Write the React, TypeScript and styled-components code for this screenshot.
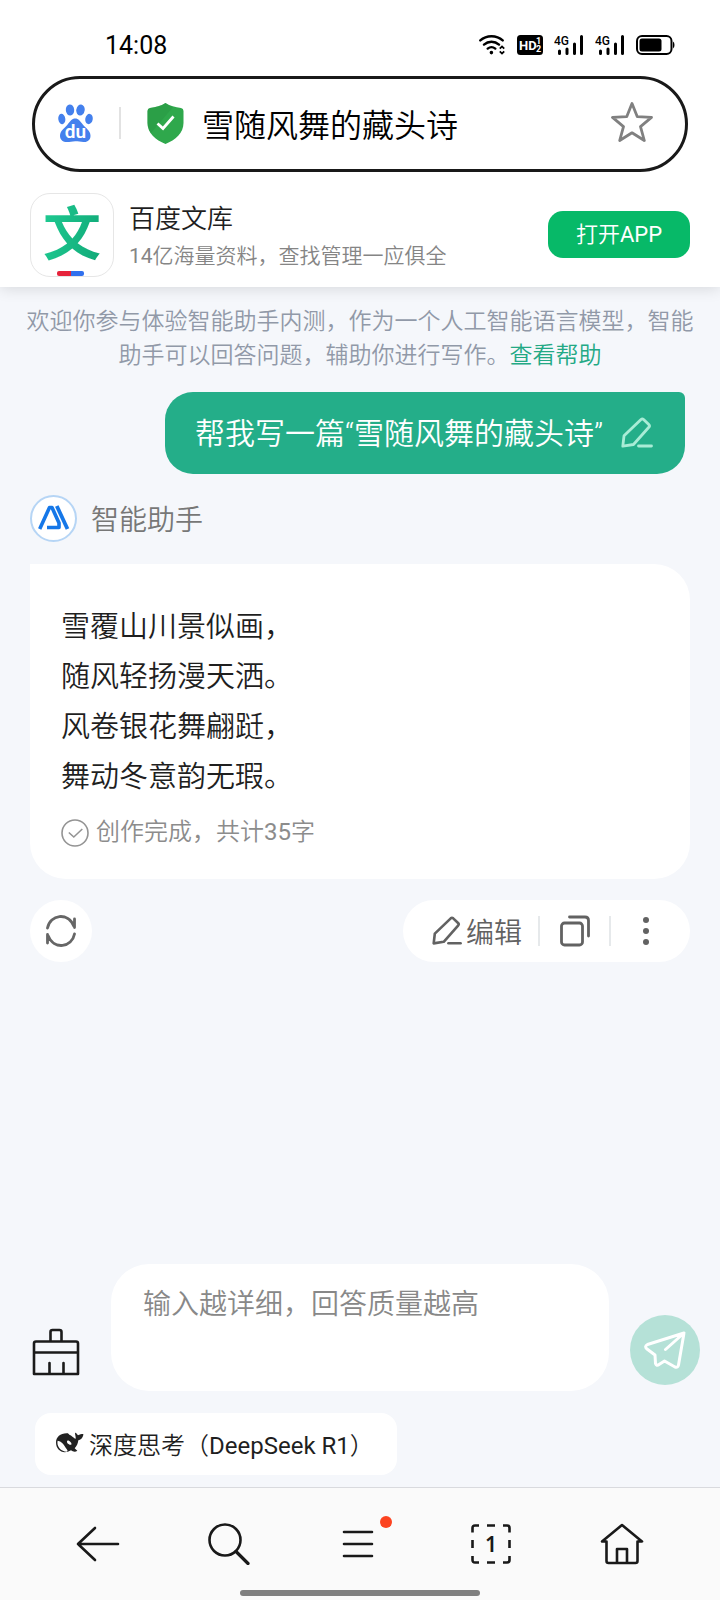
import React, { useState } from 'react';
import styled, { createGlobalStyle } from 'styled-components';

const GlobalStyle = createGlobalStyle`
  *, *::before, *::after { box-sizing: border-box; }
  body {
    margin: 0;
    background: #f5f7fb;
    font-family: Roboto, 'Noto Sans CJK SC', sans-serif;
    font-weight: 350;
    color: #1f1f1f;
  }
  button, input, textarea { font: inherit; color: inherit; }
  button { border: 0; padding: 0; background: none; cursor: pointer; }
  svg { display: block; flex: none; }
`;

const Page = styled.div`
  display: flex;
  flex-direction: column;
  min-height: 100vh;
`;

const Latin = styled.span`
  font-weight: 400;
`;

const Header = styled.header`
  background: #fff;
  box-shadow: 0 2px 14px rgba(0, 0, 0, 0.12);
  z-index: 1;
`;

const StatusBar = styled.div`
  display: flex;
  align-items: center;
  justify-content: space-between;
  height: 76px;
  padding: 14px 45px 0 105px;
  color: #000;
`;

const Clock = styled.time`
  font-size: 25px;
  font-weight: 400;
`;

const StatusIcons = styled.div`
  display: flex;
  align-items: center;
  gap: 11px;
`;

const SearchBar = styled.div`
  display: flex;
  align-items: center;
  height: 96px;
  margin: 0 32px;
  padding: 0 32px 2px 23px;
  border: 3px solid #191919;
  border-radius: 48px;
`;

const Divider = styled.span<{ $tall?: boolean }>`
  flex: none;
  width: 2px;
  height: ${(p) => (p.$tall ? 32 : 30)}px;
  background: ${(p) => (p.$tall ? '#e2e2e2' : '#e6e9eb')};
`;

const SearchIcons = styled.div`
  display: flex;
  align-items: center;
  gap: 26px;
  margin-right: 18px;
`;

const SearchInput = styled.input`
  flex: 1;
  min-width: 0;
  height: 60px;
  padding: 0;
  border: 0;
  outline: 0;
  background: none;
  font-size: 32px;
  color: #000;
`;

const StarButton = styled.button`
  padding-bottom: 3px;
`;

const Banner = styled.div`
  display: flex;
  align-items: center;
  gap: 15px;
  padding: 21px 30px 10px;
`;

const BannerLogo = styled.div`
  position: relative;
  display: flex;
  justify-content: center;
  width: 84px;
  height: 84px;
  border: 1px solid #e6e6e6;
  border-radius: 20px;
  overflow: hidden;
`;

const LogoGlyph = styled.span`
  font-size: 58px;
  line-height: 82px;
  font-weight: 700;
  background: linear-gradient(100deg, #1fcb92, #10a877);
  background-clip: text;
  color: transparent;
`;

const LogoBar = styled.span`
  position: absolute;
  bottom: 0;
  left: 26px;
  width: 27px;
  height: 5px;
  border-radius: 2px;
  background: linear-gradient(90deg, #e6233b 50%, #3170ee 50%);
`;

const BannerText = styled.div`
  flex: 1;
  min-width: 0;
  padding-top: 4px;
`;

const BannerTitle = styled.div`
  font-size: 26px;
  line-height: 38px;
  color: #1f1f1f;
`;

const BannerSub = styled.div`
  font-size: 21px;
  line-height: 36px;
  color: #858585;
`;

const OpenButton = styled.button`
  width: 142px;
  height: 47px;
  margin-bottom: 2px;
  padding-bottom: 4px;
  border-radius: 15px;
  background: #07b968;
  color: #fff;
  font-size: 22px;
`;

const Chat = styled.main`
  display: flex;
  flex-direction: column;
  flex: 1;
  padding: 18px 30px 0;
`;

const Notice = styled.p`
  margin: 0 -6px;
  font-size: 23px;
  line-height: 34px;
  text-align: center;
  color: #9199a8;
`;

const HelpLink = styled.a`
  display: inline-block;
  color: #23a985;
  text-decoration: none;
`;

const Question = styled.div`
  display: flex;
  align-items: center;
  align-self: flex-end;
  gap: 18px;
  height: 82px;
  margin: 19px 5px 0 0;
  padding: 0 32px 0 30px;
  border-radius: 28px 6px 28px 28px;
  background: #24ae89;
  color: #fff;
  font-size: 30px;
`;

const QuestionText = styled.span`
  padding-bottom: 5px;
`;

const Assistant = styled.div`
  display: flex;
  align-items: center;
  gap: 14px;
  margin-top: 21px;
  font-size: 28px;
  color: #777;
`;

const AssistantName = styled.span`
  padding-top: 4px;
  line-height: 43px;
`;

const Card = styled.article`
  margin-top: 22px;
  padding: 38px 31px 25px;
  border-radius: 0 36px 36px 36px;
  background: #fff;
`;

const Poem = styled.p`
  margin: 0;
  font-size: 29px;
  line-height: 50px;
`;

const DoneRow = styled.div`
  display: flex;
  align-items: center;
  gap: 7px;
  margin-top: 9px;
  font-size: 24px;
  line-height: 43px;
  color: #8c8c8c;
`;

const Tools = styled.div`
  display: flex;
  justify-content: space-between;
  margin-top: 21px;
  color: #626262;
`;

const RoundButton = styled.button`
  display: grid;
  place-items: center;
  width: 62px;
  height: 62px;
  border-radius: 50%;
  background: #fff;
`;

const ToolGroup = styled.div`
  display: flex;
  align-items: center;
  height: 62px;
  padding: 0 10px 0 29px;
  border-radius: 31px;
  background: #fff;
`;

const ToolButton = styled.button<{ $wide?: boolean }>`
  display: flex;
  align-items: center;
  justify-content: ${(p) => (p.$wide ? 'flex-start' : 'center')};
  gap: 4px;
  width: ${(p) => (p.$wide ? 106 : 69)}px;
  height: 62px;
  font-size: 28px;
`;

const Composer = styled.form`
  display: flex;
  align-items: flex-end;
  padding: 0 20px 0 32px;
`;

const ClearButton = styled.button`
  margin: 0 31px 15px 0;
`;

const Prompt = styled.textarea`
  flex: 1;
  min-width: 0;
  height: 127px;
  padding: 21px 32px;
  border: 0;
  outline: 0;
  resize: none;
  border-radius: 38px;
  background: #fff;
  font-size: 28px;
  line-height: 40px;
  &::placeholder { color: #888; opacity: 1; }
`;

const SendButton = styled.button`
  display: grid;
  place-items: center;
  width: 70px;
  height: 70px;
  margin: 0 0 6px 21px;
  border-radius: 50%;
  background: #b5e1d7;
`;

const ModeChip = styled.button`
  display: flex;
  align-items: center;
  align-self: flex-start;
  gap: 5px;
  height: 62px;
  margin: 22px 35px 12px;
  padding: 0 23px 2px 21px;
  border-radius: 16px;
  background: #fff;
  font-size: 24px;
`;

const BottomBar = styled.footer`
  border-top: 1px solid #d9dade;
  background: #fafafa;
`;

const Nav = styled.nav`
  display: flex;
  justify-content: space-around;
  padding: 0 33px;
`;

const NavButton = styled.button`
  position: relative;
  display: grid;
  place-items: center;
  width: 64px;
  height: 102px;
  padding-top: 10px;
`;

const Dot = styled.span`
  position: absolute;
  top: 28px;
  right: 0;
  width: 12px;
  height: 12px;
  border-radius: 50%;
  background: #fc4320;
`;

const HomeHandle = styled.div`
  width: 240px;
  height: 6px;
  margin: 0 auto 4px;
  border-radius: 3px;
  background: #808080;
`;

const Wifi = () => (
  <svg width="27" height="20" viewBox="0 0 27 20" fill="none" stroke="#000" strokeWidth="2.4" strokeLinecap="round">
    <path d="M1.3 5.4C7.5-.2 17.5-.2 23.7 5.4M5 9.6c4.3-3.8 10.7-3.8 15 0M8.7 13.6c2.3-1.8 5.3-1.8 7.6 0" />
    <circle cx="12.4" cy="17.6" r="1" fill="#000" strokeWidth="1.6" />
    <path d="M20.8 13.6l2.2-2.2 2.2 2.2M20.8 16.4l2.2 2.2 2.2-2.2" strokeWidth="1.8" strokeLinecap="butt" />
  </svg>
);

const HdBadge = () => (
  <svg width="26" height="20" viewBox="0 0 26 20" fontFamily="Roboto, sans-serif" fontWeight="700" fill="#fff">
    <rect width="26" height="20" rx="3.5" fill="#000" />
    <text x="2" y="15" fontSize="13">HD</text>
    <text x="19" y="9" fontSize="9">1</text>
    <text x="19" y="17" fontSize="9">2</text>
  </svg>
);

const Signal = () => (
  <svg width="30" height="28" viewBox="0 -4 30 28" stroke="#000" strokeWidth="3" strokeLinecap="round">
    <text x="0" y="10" fontSize="12" fontFamily="Roboto, sans-serif" fontWeight="500" stroke="none">4G</text>
    <path d="M5.5 16v2.5M13 14v4.5M20.5 9v9.5M27.5 1.5v17" />
  </svg>
);

const Battery = () => (
  <svg width="39" height="20" viewBox="0 0 39 20">
    <rect x="1" y="1" width="34.5" height="18" rx="5" fill="none" stroke="#000" strokeWidth="2" />
    <rect x="3.5" y="3.5" width="22" height="13" rx="2.5" />
    <path d="M37 6.5q1.500.5 1.500 3.500t-1.500 3.500z" />
  </svg>
);

const Paw = () => (
  <svg width="35" height="38" viewBox="0 0 35 38" fill="#4480ed">
    <ellipse cx="3.8" cy="15" rx="3.5" ry="5.2" transform="rotate(-8 3.8 15)" />
    <ellipse cx="12" cy="6" rx="4.2" ry="5.6" transform="rotate(-4 12 6)" />
    <ellipse cx="22.5" cy="6" rx="4.2" ry="5.6" transform="rotate(8 22.5 6)" />
    <ellipse cx="31" cy="15" rx="3.7" ry="5.2" transform="rotate(10 31 15)" />
    <path d="M17.2 14.5c3.3 0 5 2.7 7.6 6 2.5 3.3 7.7 6 7.7 11.2 0 4.5-3.2 6.5-7 6.300-3.200-.2-5-.8-8.300-.8s-5.200.8-8.200.8C5 38 2 35.800 2 31.700c0-5.100 5-7.900 7.600-11.200 2.600-3.300 4.300-6 7.600-6z" />
    <text x="17.5" y="34" fontSize="19" fontFamily="Roboto, sans-serif" fontWeight="600" textAnchor="middle" fill="#fff">du</text>
  </svg>
);

const Shield = () => (
  <svg width="37" height="41" viewBox="0 0 37 41">
    <path d="M18.5 0c4.600 2.900 9.500 4.300 15.500 5q2.500.5 2.500 3v12C36.500 30 28.500 37 18.500 41 8.500 37 .5 30 .5 20V8Q.5 5.500 3 5C9 4.300 13.900 2.900 18.500 0z" fill="#2fa84c" />
    <path d="M4 30L26 4c-3-1.100-5.200-2.300-7.500-4C13.900 2.900 9 4.300 3 5Q.5 5.500.5 8v12c0 3.800 1.200 7.100 3.500 10z" fill="#279641" opacity=".5" />
    <path d="M10.500 20.500l5.500 5 10.500-12" fill="none" stroke="#fff" strokeWidth="2.8" />
  </svg>
);

const Star = () => (
  <svg width="42" height="42" viewBox="0 0 42 42" fill="none" stroke="#808080" strokeWidth="2.8" strokeLinejoin="round">
    <path d="M21 2.500l5.200 13.100 14.300.8-11 9.200 3.800 13.900L21 31.800 8.700 39.500l3.800-13.900-11-9.200 14.300-.8z" />
  </svg>
);

const Pencil = ({ size = 32, color = 'currentColor' }: { size?: number; color?: string }) => (
  <svg width={size} height={size} viewBox="0 0 32 32" fill="none" stroke={color} strokeWidth="2.8" strokeLinejoin="round" strokeLinecap="round">
    <path d="M20 2.500a2 2 0 0 1 2.600 0l5.200 5a2 2 0 0 1 0 2.800L12.500 27.500l-10.700 1.700L3 18.800z" />
    <path d="M17.500 29h13" />
  </svg>
);

const Avatar = () => (
  <svg width="47" height="47" viewBox="0 0 47 47">
    <circle cx="23.5" cy="23.5" r="22.5" fill="#fff" stroke="#b6d5f5" strokeWidth="2" />
    <path d="M9.700 34L19.500 12.500h2.500L29 28v4.500H17" fill="none" stroke="#1577e8" strokeWidth="3.6" strokeLinejoin="round" />
    <path d="M26.800 11L37.500 34" fill="none" stroke="#1577e8" strokeWidth="3.8" />
  </svg>
);

const DoneIcon = () => (
  <svg width="28" height="28" viewBox="0 0 28 28" fill="none" stroke="#949494" strokeWidth="1.6">
    <circle cx="14" cy="14" r="13" />
    <path d="M7.800 13.500l5 4.500 8.500-8" />
  </svg>
);

const Refresh = () => (
  <svg width="30" height="32" viewBox="0 0 30 32" fill="none" stroke="#666" strokeWidth="2.8" strokeLinecap="round" strokeLinejoin="round">
    <path d="M1.500 13C4-.5 22-3.500 28 11.500M28.500 4v8.500M28.500 19C26 32.500 8 35.500 2 20.500M1.500 28v-8.500" />
  </svg>
);

const Copy = () => (
  <svg width="30" height="32" viewBox="0 0 30 32" fill="none" stroke="currentColor" strokeWidth="2.8" strokeLinecap="round" strokeLinejoin="round">
    <rect x="1.5" y="8" width="21" height="22" rx="3" />
    <path d="M9.500 2H25q3.500 0 3.500 3.500V21" />
  </svg>
);

const More = () => (
  <svg width="8" height="30" viewBox="0 0 8 30" fill="currentColor">
    <circle cx="4" cy="4" r="3" />
    <circle cx="4" cy="15" r="3" />
    <circle cx="4" cy="26" r="3" />
  </svg>
);

const Broom = () => (
  <svg width="48" height="48" viewBox="0 0 48 48" fill="none" stroke="#1b1b1b" strokeWidth="2.6" strokeLinejoin="round" strokeLinecap="round">
    <path d="M18.500 13.500V4q0-2 2-2h7q2 0 2 2v9.500M4 13.500h40q2 0 2 2V46H2V15.500q0-2 2-2zM2 24.500h44M17.500 46V35M31.500 46V35" />
  </svg>
);

const Plane = () => (
  <svg width="42" height="38" viewBox="0 0 42 38" fill="none" stroke="#fff" strokeWidth="3" strokeLinejoin="round" strokeLinecap="round">
    <path d="M40 2L3.500 13.500q-3.500 2-.5 4.500L11 24l.5 8.500q1 3 3.500 1l5.500-3.500 10.500 6q3 1 3.500-2zL21.500 18.500" />
  </svg>
);

const Whale = () => (
  <svg width="28" height="22" viewBox="0 0 84 64">
    <path
      fillRule="evenodd"
      fill="#222"
      d="M0 30C0 14 14 2 34 3c3 0 3 2 6 4 7 3 12 8 18 13 3-5-1-10-1-19 5 0 6 5 9 8 5-3 10-4 16-4 0 10-7 17-15 19-1 10-5 18-11 24l8 7c-7 6-14 2-19-1C23 67 0 56 0 30zM5 25c-4 17 9 32 27 33 5-1 2-6-3-12C22 34 16 27 5 25zM34 25c-3 4 0 10 7 12 6 2 7-3 3-7-3-4-7-6-10-5z"
    />
  </svg>
);

const Back = () => (
  <svg width="44" height="36" viewBox="0 0 44 36" fill="none" stroke="#191919" strokeWidth="2.6" strokeLinecap="round" strokeLinejoin="round">
    <path d="M19 2L2 18l17 16M2 18h40" />
  </svg>
);

const Search = () => (
  <svg width="42" height="42" viewBox="0 0 42 42" fill="none" stroke="#191919" strokeWidth="2.6" strokeLinecap="round">
    <circle cx="17" cy="17" r="15.5" />
    <path d="M28 28.500l12 12" strokeWidth="3.2" />
  </svg>
);

const Menu = () => (
  <svg width="36" height="28" viewBox="0 0 36 28" stroke="#191919" strokeWidth="2.6" strokeLinecap="round">
    <path d="M2 2h28M2 14h28M2 26h28" />
  </svg>
);

const Tabs = () => (
  <svg width="40" height="40" viewBox="0 0 40 40" fill="none" stroke="#191919" strokeWidth="2.6">
    <path d="M1.500 8.500V4q0-2.500 2.500-2.500h4M16 1.500h8M32 1.500h4q2.500 0 2.500 2.500v4.500M38.500 16v8M38.500 32v4q0 2.500-2.500 2.500h-4M24 38.500h-8M8 38.500H4q-2.500 0-2.500-2.500v-4M1.500 24v-8" />
    <text x="20" y="27.5" fontSize="21" fontFamily="'Noto Sans', sans-serif" fontWeight="600" textAnchor="middle" fill="#191919" stroke="none">1</text>
  </svg>
);

const Home = () => (
  <svg width="44" height="42" viewBox="0 0 44 42" fill="none" stroke="#191919" strokeWidth="2.6" strokeLinecap="round" strokeLinejoin="round">
    <path d="M6.500 18.500H2L22 2l20 16.500h-4.500V38q0 2-2 2h-27q-2 0-2-2zM17 40V26h10v14" />
  </svg>
);

const poem = ['雪覆山川景似画，', '随风轻扬漫天洒。', '风卷银花舞翩跹，', '舞动冬意韵无瑕。'];

export default function App() {
  const [deepThink, setDeepThink] = useState(false);

  return (
    <Page>
      <GlobalStyle />
      <Header>
        <StatusBar>
          <Clock>14:08</Clock>
          <StatusIcons>
            <Wifi />
            <HdBadge />
            <Signal />
            <Signal />
            <Battery />
          </StatusIcons>
        </StatusBar>
        <SearchBar>
          <SearchIcons>
            <Paw />
            <Divider $tall />
            <Shield />
          </SearchIcons>
          <SearchInput aria-label="搜索" defaultValue="雪随风舞的藏头诗" />
          <StarButton type="button" aria-label="收藏">
            <Star />
          </StarButton>
        </SearchBar>
        <Banner>
          <BannerLogo>
            <LogoGlyph>文</LogoGlyph>
            <LogoBar />
          </BannerLogo>
          <BannerText>
            <BannerTitle>百度文库</BannerTitle>
            <BannerSub>
              <Latin>14</Latin>亿海量资料，查找管理一应俱全
            </BannerSub>
          </BannerText>
          <OpenButton type="button">
            打开<Latin>APP</Latin>
          </OpenButton>
        </Banner>
      </Header>

      <Chat>
        <Notice>
          欢迎你参与体验智能助手内测，作为一个人工智能语言模型，智能助手可以回答问题，辅助你进行写作。
          <HelpLink href="#help">查看帮助</HelpLink>
        </Notice>
        <Question>
          <QuestionText>帮我写一篇“雪随风舞的藏头诗”</QuestionText>
          <button type="button" aria-label="编辑问题">
            <Pencil color="#a9ecd6" />
          </button>
        </Question>
        <Assistant>
          <Avatar />
          <AssistantName>智能助手</AssistantName>
        </Assistant>
        <Card>
          <Poem>
            {poem.map((line) => (
              <React.Fragment key={line}>
                {line}
                <br />
              </React.Fragment>
            ))}
          </Poem>
          <DoneRow>
            <DoneIcon />
            <span>
              创作完成，共计<Latin>35</Latin>字
            </span>
          </DoneRow>
        </Card>
        <Tools>
          <RoundButton type="button" aria-label="重新生成">
            <Refresh />
          </RoundButton>
          <ToolGroup>
            <ToolButton type="button" $wide>
              <Pencil size={30} />
              编辑
            </ToolButton>
            <Divider />
            <ToolButton type="button" aria-label="复制">
              <Copy />
            </ToolButton>
            <Divider />
            <ToolButton type="button" aria-label="更多">
              <More />
            </ToolButton>
          </ToolGroup>
        </Tools>
      </Chat>

      <Composer onSubmit={(e) => e.preventDefault()}>
        <ClearButton type="button" aria-label="清空对话">
          <Broom />
        </ClearButton>
        <Prompt aria-label="输入内容" placeholder="输入越详细，回答质量越高" />
        <SendButton type="submit" aria-label="发送">
          <Plane />
        </SendButton>
      </Composer>
      <ModeChip type="button" aria-pressed={deepThink} onClick={() => setDeepThink(!deepThink)}>
        <Whale />
        <span>
          深度思考（<Latin>DeepSeek R1</Latin>）
        </span>
      </ModeChip>

      <BottomBar>
        <Nav>
          <NavButton type="button" aria-label="返回">
            <Back />
          </NavButton>
          <NavButton type="button" aria-label="搜索">
            <Search />
          </NavButton>
          <NavButton type="button" aria-label="菜单">
            <Menu />
            <Dot />
          </NavButton>
          <NavButton type="button" aria-label="标签页">
            <Tabs />
          </NavButton>
          <NavButton type="button" aria-label="主页">
            <Home />
          </NavButton>
        </Nav>
        <HomeHandle />
      </BottomBar>
    </Page>
  );
}
